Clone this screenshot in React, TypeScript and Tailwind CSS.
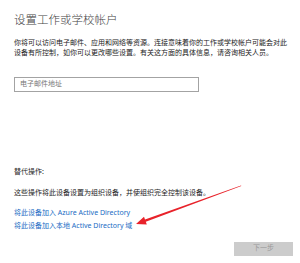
import React from 'react';

export default function App() {
  return (
    <div
      className="relative w-[300px] h-[263px] overflow-hidden bg-white pl-[14px] pr-[7px] text-[#222]"
      style={{ fontFamily: '"Noto Sans", "Noto Sans CJK SC", sans-serif' }}>
      {/* Header */}
      <h1 className="pt-[12px] text-[11.5px] leading-[16px] font-light text-[#444]">设置工作或学校帐户</h1>

      <p className="mt-[10px] text-[7px] leading-[9.6px] text-[#222]">
        你将可以访问电子邮件、应用和网络等资源。连接意味着你的工作或学校帐户可能会对此设备有所控制，如你可以更改哪些设置。有关这方面的具体信息，请咨询相关人员。
      </p>

      <div className="mt-[19.5px] flex h-[15px] w-[185px] items-center border border-[#a3a3a3] px-[5px]">
        <span className="text-[7px] text-[#777]">电子邮件地址</span>
      </div>

      {/* Alternative actions */}
      <div className="mt-[75px] text-[7px] leading-[10px] text-[#222]">替代操作:</div>
      <div className="mt-[11px] text-[7px] leading-[10px] text-[#222]">这些操作将此设备设置为组织设备，并使组织完全控制该设备。</div>

      <div className="mt-[10px] text-[7px] leading-[10px] text-[#1a6cc4]">将此设备加入 Azure Active Directory</div>
      <div className="mt-[3px] text-[7px] leading-[10px] text-[#1a6cc4]">将此设备加入本地 Active Directory 域</div>

      <div className="mt-[11px] flex justify-end">
        <div className="flex h-[14px] w-[59px] items-center justify-center bg-[#cccccc] text-[7px] text-[#9a9a9a]">下一步</div>
      </div>

      {/* red annotation arrow */}
      <svg className="pointer-events-none absolute left-0 top-0" width="300" height="263" viewBox="0 0 300 263">
        <polygon
          points="136,224 144,216.8 145,219.5 241,185.4 241.3,186.1 145.8,221.7 146.8,224.4"
          fill="#e8222a"
        />
      </svg>
    </div>
  );
}
